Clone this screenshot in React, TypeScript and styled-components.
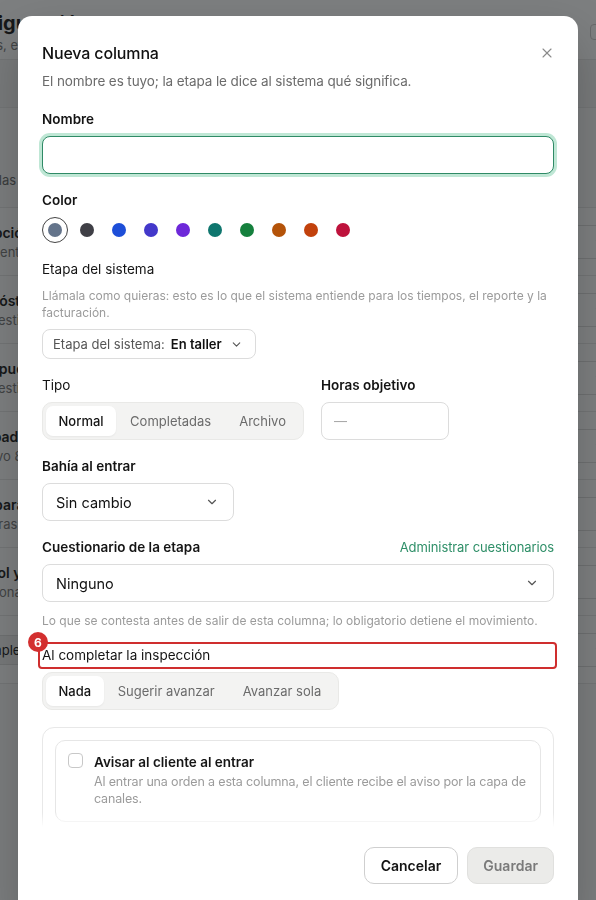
import React from "react"
import styled, { createGlobalStyle } from "styled-components"
import { X, ChevronDown } from "lucide-react"

const GlobalStyle = createGlobalStyle`
  html, body {
    margin: 0;
    padding: 0;
    height: 100%;
    overflow: hidden;
  }
  body {
    font-family: Inter, "Noto Sans", "Liberation Sans", sans-serif;
    color: #161616;
    background: #ffffff;
  }
  * { box-sizing: border-box; }
`

const SWATCHES = [
  "#64748b", "#3f3f46", "#1d4ed8", "#4338ca", "#6d28d9",
  "#0f766e", "#15803d", "#b45309", "#c2410c", "#be123c",
]

const BG_ROWS = [
  { title: "Recepción", sub: "Taller, entrada del vehículo" },
  { title: "Diagnóstico", sub: "Sin cuestionario" },
  { title: "Presupuesto", sub: "Sin cuestionario" },
  { title: "Aprobado", sub: "Objetivo 8 horas" },
  { title: "En reparación", sub: "Sin horas objetivo" },
  { title: "Control y entrega", sub: "Cuestionario de salida" },
]

export default function App() {
  return (
    <>
      <GlobalStyle />
      <Page>
        <PageHeader>
          <div>
            <PageTitle>Configuración</PageTitle>
            <PageSub>Tiempos, etapas y columnas del tablero</PageSub>
          </div>
          <IconBox>◉</IconBox>
        </PageHeader>
        <PageTabs />
        <PageIntro>Ordena las columnas del taller, cada una con su etapa.</PageIntro>
        {BG_ROWS.map((r) => (
          <BgRow key={r.title}>
            <div>
              <BgRowTitle>{r.title}</BgRowTitle>
              <BgRowSub>{r.sub}</BgRowSub>
            </div>
            <BgSelect><ChevronDown size={14} /></BgSelect>
          </BgRow>
        ))}
        <BgRow>
          <BgButton>Completadas</BgButton>
          <BgSelect><ChevronDown size={14} /></BgSelect>
        </BgRow>
      </Page>

      <Overlay />
      <Dialog>
        <Header>
          <Title>Nueva columna</Title>
          <CloseButton><X size={16} strokeWidth={1.6} /></CloseButton>
        </Header>
        <Subtitle>El nombre es tuyo; la etapa le dice al sistema qué significa.</Subtitle>

        <Body>
          <Field>
            <Label>Nombre</Label>
            <TextInput autoFocus={false} />
          </Field>

          <Field>
            <Label>Color</Label>
            <SwatchRow>
              {SWATCHES.map((c, i) => (
                <Swatch key={c} $selected={i === 0}>
                  <Dot $color={c} />
                </Swatch>
              ))}
            </SwatchRow>
          </Field>

          <Field>
            <Label $plain>Etapa del sistema</Label>
            <Help $top={1} $bottom={0}>
              Llámala como quieras: esto es lo que el sistema entiende para los tiempos, el reporte y la facturación.
            </Help>
            <StageButton>
              <StageKey>Etapa del sistema:</StageKey>
              <StageValue>En taller</StageValue>
              <ChevronDown size={13} color="#555" />
            </StageButton>
          </Field>

          <TwoCols>
            <Field>
              <Label $plain>Tipo</Label>
              <Segmented>
                <Segment $active>Normal</Segment>
                <Segment>Completadas</Segment>
                <Segment>Archivo</Segment>
              </Segmented>
            </Field>
            <Field>
              <Label>Horas objetivo</Label>
              <HoursInput placeholder="—" />
            </Field>
          </TwoCols>

          <Field>
            <Label>Bahía al entrar</Label>
            <Select $width={192}>
              <span>Sin cambio</span>
              <ChevronDown size={14} color="#555" />
            </Select>
          </Field>

          <Field>
            <LabelRow>
              <Label>Cuestionario de la etapa</Label>
              <Link>Administrar cuestionarios</Link>
            </LabelRow>
            <Select>
              <span>Ninguno</span>
              <ChevronDown size={14} color="#555" />
            </Select>
            <Help $top={2} $bottom={0}>
              Lo que se contesta antes de salir de esta columna; lo obligatorio detiene el movimiento.
            </Help>
          </Field>

          <Field>
            <Annotated>
              <Label $plain>Al completar la inspección</Label>
              <Marker />
              <Badge>6</Badge>
            </Annotated>
            <Segmented>
              <Segment $active>Nada</Segment>
              <Segment>Sugerir avanzar</Segment>
              <Segment>Avanzar sola</Segment>
            </Segmented>
          </Field>

          <Panel>
            <OptionCard>
              <Checkbox />
              <div>
                <OptionTitle>Avisar al cliente al entrar</OptionTitle>
                <OptionText>
                  Al entrar una orden a esta columna, el cliente recibe el aviso por la capa de canales.
                </OptionText>
              </div>
            </OptionCard>
          </Panel>
          <Fade />
        </Body>

        <Footer>
          <Button>Cancelar</Button>
          <Button $primary disabled>Guardar</Button>
        </Footer>
      </Dialog>
    </>
  )
}

/* background page */

const Page = styled.div`
  margin-left: -60px;
  width: 678px;
  height: 900px;
  overflow: hidden;
  background: #fafafa;
`

const PageHeader = styled.div`
  display: flex;
  justify-content: space-between;
  align-items: center;
  padding: 14px 0 10px 10px;
  height: 60px;
  border-bottom: 1px solid #e6e6e6;
  background: #fff;
`

const PageTitle = styled.div`
  font-size: 20px;
  font-weight: 700;
`

const PageSub = styled.div`
  font-size: 13px;
  color: #777;
  margin-top: 2px;
`

const IconBox = styled.div`
  width: 20px;
  height: 16px;
  border: 1px solid #ccc;
  border-radius: 4px;
  font-size: 9px;
  color: #888;
  display: flex;
  align-items: center;
  justify-content: center;
  margin-right: 8px;
`

const PageTabs = styled.div`
  height: 48px;
  border-bottom: 1px solid #e6e6e6;
  background: #f3f3f3;
`

const PageIntro = styled.div`
  padding: 64px 0 0 10px;
  height: 100px;
  font-size: 13px;
  color: #666;
  border-bottom: 1px solid #e6e6e6;
`

const BgRow = styled.div`
  display: flex;
  justify-content: space-between;
  align-items: center;
  height: 68px;
  padding: 0 0 0 20px;
  border-bottom: 1px solid #e6e6e6;
  background: #fff;
`

const BgRowTitle = styled.div`
  font-size: 14px;
  font-weight: 600;
`

const BgRowSub = styled.div`
  font-size: 13px;
  color: #777;
  margin-top: 3px;
`

const BgSelect = styled.div`
  width: 120px;
  height: 34px;
  border: 1px solid #ddd;
  border-radius: 8px;
  display: flex;
  align-items: center;
  justify-content: flex-end;
  padding-right: 10px;
  color: #444;
`

const BgButton = styled.div`
  padding: 6px 12px;
  border: 1px solid #ddd;
  border-radius: 8px;
  font-size: 13px;
  background: #f0f0f0;
`

const Overlay = styled.div`
  position: fixed;
  inset: 0;
  background: rgba(24, 26, 28, 0.56);
`

/* dialog */

const Dialog = styled.div`
  position: fixed;
  top: 16px;
  left: 18px;
  width: 560px;
  height: 900px;
  background: #fff;
  border-radius: 14px;
  padding: 26px 24px 24px;
  display: flex;
  flex-direction: column;
  box-shadow: 0 20px 50px rgba(0, 0, 0, 0.2);
`

const Header = styled.div`
  display: flex;
  justify-content: space-between;
  align-items: center;
  height: 22px;
`

const Title = styled.h2`
  margin: 0;
  font-size: 16px;
  font-weight: 500;
  letter-spacing: -0.15px;
  color: #111;
`

const CloseButton = styled.button`
  border: none;
  background: none;
  padding: 0;
  color: #8a8a8a;
  display: flex;
  margin-right: -1px;
`

const Subtitle = styled.p`
  margin: 7px 0 0;
  font-size: 13.5px;
  letter-spacing: -0.1px;
  line-height: 20px;
  color: #6b6b6b;
`

const Body = styled.div`
  position: relative;
  margin: 19px -24px 0;
  padding: 0 24px;
  height: 717px;
  overflow: hidden;
  display: flex;
  flex-direction: column;
  gap: 17px;
`

const Field = styled.div`
  display: flex;
  flex-direction: column;
  gap: 8px;
`

const Label = styled.div<{ $plain?: boolean }>`
  font-size: 13.5px;
  line-height: 18px;
  font-weight: ${(p) => (p.$plain ? 400 : 600)};
  color: #141414;
`

const LabelRow = styled.div`
  display: flex;
  justify-content: space-between;
  align-items: center;
`

const Link = styled.a`
  font-size: 13px;
  letter-spacing: -0.1px;
  color: #2f8f68;
`

const TextInput = styled.input`
  height: 38px;
  border: 1px solid #2f8a66;
  border-radius: 8px;
  box-shadow: 0 0 0 3px #bfe7d5;
  outline: none;
  font: inherit;
  padding: 0 12px;
`

const SwatchRow = styled.div`
  display: flex;
  gap: 6px;
`

const Swatch = styled.div<{ $selected?: boolean }>`
  width: 26px;
  height: 26px;
  border-radius: 50%;
  display: flex;
  align-items: center;
  justify-content: center;
  border: 1px solid ${(p) => (p.$selected ? "#444" : "transparent")};
`

const Dot = styled.span<{ $color: string }>`
  width: 14px;
  height: 14px;
  border-radius: 50%;
  background: ${(p) => p.$color};
`

const Help = styled.div<{ $top: number; $bottom: number }>`
  font-size: 12px;
  line-height: 17px;
  color: #9b9b9b;
  margin: ${(p) => p.$top}px 0 ${(p) => p.$bottom}px;
`

const StageButton = styled.div`
  align-self: flex-start;
  display: flex;
  align-items: center;
  gap: 6px;
  height: 30px;
  padding: 0 12px 0 10px;
  border: 1px solid #dcdcdc;
  border-radius: 8px;
  font-size: 13px;
`

const StageKey = styled.span`
  color: #555;
`

const StageValue = styled.span`
  font-weight: 600;
  color: #111;
  margin-right: 2px;
`

const TwoCols = styled.div`
  display: flex;
  gap: 17px;
`

const Segmented = styled.div`
  display: flex;
  align-items: center;
  height: 38px;
  padding: 3px;
  background: #f3f3f2;
  border: 1px solid #e9e9e7;
  border-radius: 10px;
  align-self: flex-start;
`

const Segment = styled.div<{ $active?: boolean }>`
  height: 30px;
  padding: 0 ${(p) => (p.$active ? 12.5 : 14)}px;
  display: flex;
  align-items: center;
  font-size: 13px;
  border-radius: 7px;
  background: ${(p) => (p.$active ? "#fff" : "transparent")};
  color: ${(p) => (p.$active ? "#151515" : "#6b6b6b")};
  font-weight: ${(p) => (p.$active ? 500 : 400)};
  box-shadow: ${(p) => (p.$active ? "0 1px 2px rgba(0,0,0,0.05)" : "none")};
`

const HoursInput = styled.input`
  width: 128px;
  height: 38px;
  border: 1px solid #dcdcdc;
  border-radius: 8px;
  padding: 0 12px;
  font: inherit;
  font-size: 13px;
  outline: none;
  &::placeholder { color: #aaa; }
`

const Select = styled.div<{ $width?: number }>`
  width: ${(p) => (p.$width ? `${p.$width}px` : "100%")};
  height: 38px;
  display: flex;
  align-items: center;
  justify-content: space-between;
  padding: 0 14px 0 13px;
  border: 1px solid #dcdcdc;
  border-radius: 8px;
  font-size: 14.5px;
  color: #111;
`

const Annotated = styled.div`
  position: relative;
`

const Marker = styled.div`
  position: absolute;
  left: -4px;
  right: -3px;
  top: -4px;
  bottom: -5px;
  border: 2px solid #cf2e2e;
  border-radius: 4px;
`

const Badge = styled.div`
  position: absolute;
  left: -14px;
  top: -14px;
  width: 20px;
  height: 20px;
  border-radius: 50%;
  background: #d32f2f;
  color: #fff;
  font-size: 12px;
  font-weight: 700;
  display: flex;
  align-items: center;
  justify-content: center;
`

const Panel = styled.div`
  border: 1px solid #e8e8e8;
  border-radius: 12px;
  padding: 12px 12px 40px;
`

const OptionCard = styled.div`
  display: flex;
  gap: 11px;
  padding: 11px 12px 14px;
  border: 1px solid #e6e6e6;
  border-radius: 10px;
`

const Checkbox = styled.span`
  flex: none;
  width: 15px;
  height: 15px;
  margin-top: 1px;
  border: 1px solid #c8c8c8;
  border-radius: 4px;
`

const OptionTitle = styled.div`
  font-size: 13.5px;
  font-weight: 600;
  line-height: 18px;
  margin-top: 1px;
`

const OptionText = styled.div`
  font-size: 12.5px;
  letter-spacing: -0.15px;
  line-height: 17px;
  color: #9b9b9b;
  margin-top: 2px;
`

const Fade = styled.div`
  position: absolute;
  left: 0;
  right: 0;
  bottom: 0;
  height: 14px;
  background: linear-gradient(rgba(255,255,255,0), #fff);
`

const Footer = styled.div`
  display: flex;
  justify-content: flex-end;
  gap: 9px;
  padding-top: 20px;
`

const Button = styled.button<{ $primary?: boolean }>`
  height: 37px;
  padding: 0 ${(p) => (p.$primary ? 15 : 16)}px;
  border-radius: 10px;
  font-family: inherit;
  font-size: 14px;
  font-weight: 600;
  border: 1px solid ${(p) => (p.$primary ? "#e0e0de" : "#cfcfcf")};
  background: ${(p) => (p.$primary ? "#ebebe9" : "#fff")};
  color: ${(p) => (p.$primary ? "#7a7a7a" : "#141414")};
`
